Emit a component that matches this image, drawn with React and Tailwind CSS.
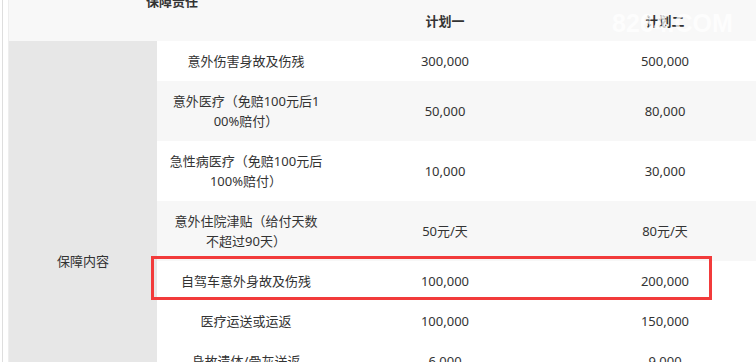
const rows = [
  { name: '意外伤害身故及伤残', a: '300,000', b: '500,000' },
  { name: '意外医疗（免赔100元后100%赔付）', a: '50,000', b: '80,000' },
  { name: '急性病医疗（免赔100元后100%赔付）', a: '10,000', b: '30,000' },
  { name: '意外住院津贴（给付天数不超过90天）', a: '50元/天', b: '80元/天' },
  { name: '自驾车意外身故及伤残', a: '100,000', b: '200,000' },
  { name: '医疗运送或运返', a: '100,000', b: '150,000' },
  { name: '身故遗体/骨灰送返', a: '6,000', b: '9,000' },
  { name: '个人责任（每次事故免赔500元）', a: '100,000', b: '200,000' },
  { name: '紧急救援服务', a: '有', b: '有' },
];

const App = () => {
  return (
    <div className="relative h-[362px] w-[756px] overflow-hidden bg-white font-['Noto_Sans','Noto_Sans_CJK_SC',sans-serif] text-[13px] leading-[20px] text-[#333]">
      <div className="absolute left-[2px] top-0 h-full w-px bg-[#dedede]" />
      <div className="ml-[8px] w-[767px] border-l border-[#eeeeee]">
        <div className="grid grid-cols-[148px_178px_220px_220px]">
          {/* header */}
          <div className="col-span-2 h-[41px] bg-[#f8f8f8] text-center font-bold">
            <div className="-mt-[9px]">保障责任</div>
          </div>
          <div className="flex h-[41px] items-center justify-center bg-[#f8f8f8] font-bold">计划一</div>
          <div className="flex h-[41px] items-center justify-center bg-[#f8f8f8] font-bold">计划二</div>

          {/* body */}
          <div className="row-span-9 flex items-center justify-center bg-[#e7e7e7]">保障内容</div>
          {rows.map((r, i) => {
            const bg = i === 1 || i === 3 ? 'bg-[#f7f7f7]' : 'bg-white';
            return [
              <div key={r.name} className={`flex items-center justify-center px-[12px] py-[10px] text-center break-all ${bg}`}>
                {r.name}
              </div>,
              <div key={r.name + 'a'} className={`flex items-center justify-center py-[10px] ${bg}`}>{r.a}</div>,
              <div key={r.name + 'b'} className={`flex items-center justify-center py-[10px] ${bg}`}>{r.b}</div>,
            ];
          })}
        </div>
      </div>

      {/* watermark */}
      <div className="pointer-events-none absolute left-[612px] top-[8px] font-['Liberation_Sans',sans-serif] text-[25px] font-bold leading-[30px] text-white/75">
        8264.COM
      </div>

      {/* highlight box */}
      <div className="absolute left-[151px] top-[256px] h-[44px] w-[561px] border-[3px] border-[#f23b3b]" />
    </div>
  );
};

export default App;
